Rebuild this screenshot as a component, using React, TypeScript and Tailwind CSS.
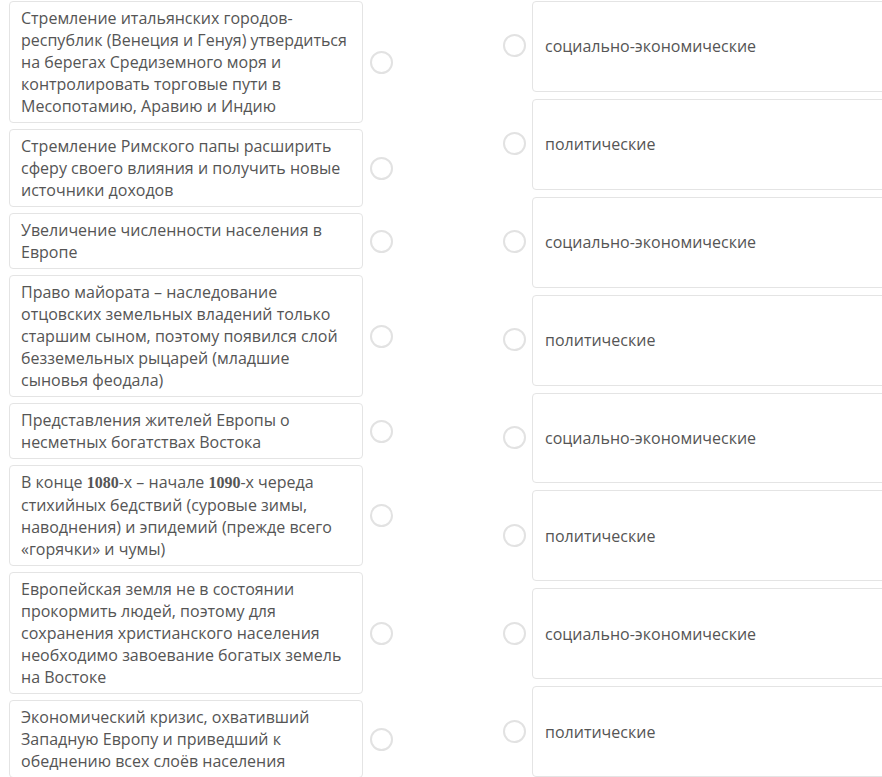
import type { ReactNode } from "react";

const leftItems: ReactNode[] = [
  "Стремление итальянских городов-республик (Венеция и Генуя) утвердиться на берегах Средиземного моря и контролировать торговые пути в Месопотамию, Аравию и Индию",
  "Стремление Римского папы расширить сферу своего влияния и получить новые источники доходов",
  "Увеличение численности населения в Европе",
  "Право майората – наследование отцовских земельных владений только старшим сыном, поэтому появился слой безземельных рыцарей (младшие сыновья феодала)",
  "Представления жителей Европы о несметных богатствах Востока",
  <>
    В конце <span className="font-['Liberation_Serif',serif] font-bold">1080</span>-х – начале{" "}
    <span className="font-['Liberation_Serif',serif] font-bold">1090</span>-х череда стихийных бедствий (суровые зимы,
    наводнения) и эпидемий (прежде всего «горячки» и чумы)
  </>,
  "Европейская земля не в состоянии прокормить людей, поэтому для сохранения христианского населения необходимо завоевание богатых земель на Востоке",
  "Экономический кризис, охвативший Западную Европу и приведший к обеднению всех слоёв населения",
];

const rightItems = [
  "социально-экономические",
  "политические",
  "социально-экономические",
  "политические",
  "социально-экономические",
  "политические",
  "социально-экономические",
  "политические",
];

const Radio = () => (
  <span className="block w-[23px] h-[23px] rounded-full border-2 border-[#e2e2e2] bg-white shrink-0" />
);

export default function App() {
  return (
    <div className="w-[882px] h-[777px] overflow-hidden bg-white font-['Open_Sans',sans-serif] text-[16px] leading-[22px] text-[#555]">
      <div className="flex w-[920px] h-[777px]">
        {/* left column */}
        <div className="flex flex-col gap-[6px] pl-[9px] pt-[1px] w-[392px] shrink-0">
          {leftItems.map((item, i) => (
            <div key={i} className="flex items-center">
              <div className="w-[354px] shrink-0 rounded-[4px] border border-[#e4e4e4] px-[11px] py-[5px]">
                {item}
              </div>
              <div className="ml-[7px]">
                <Radio />
              </div>
            </div>
          ))}
        </div>

        {/* right column */}
        <div className="flex flex-col gap-[7px] pl-[111px] pt-[1px] flex-1">
          {rightItems.map((item, i) => (
            <div key={i} className="flex items-center flex-1">
              <div className="mr-[6px] -mt-[1px]">
                <Radio />
              </div>
              <div className="flex-1 h-full flex items-center rounded-[4px] border border-[#e4e4e4] px-[12px]">
                {item}
              </div>
            </div>
          ))}
        </div>
      </div>
    </div>
  );
}
